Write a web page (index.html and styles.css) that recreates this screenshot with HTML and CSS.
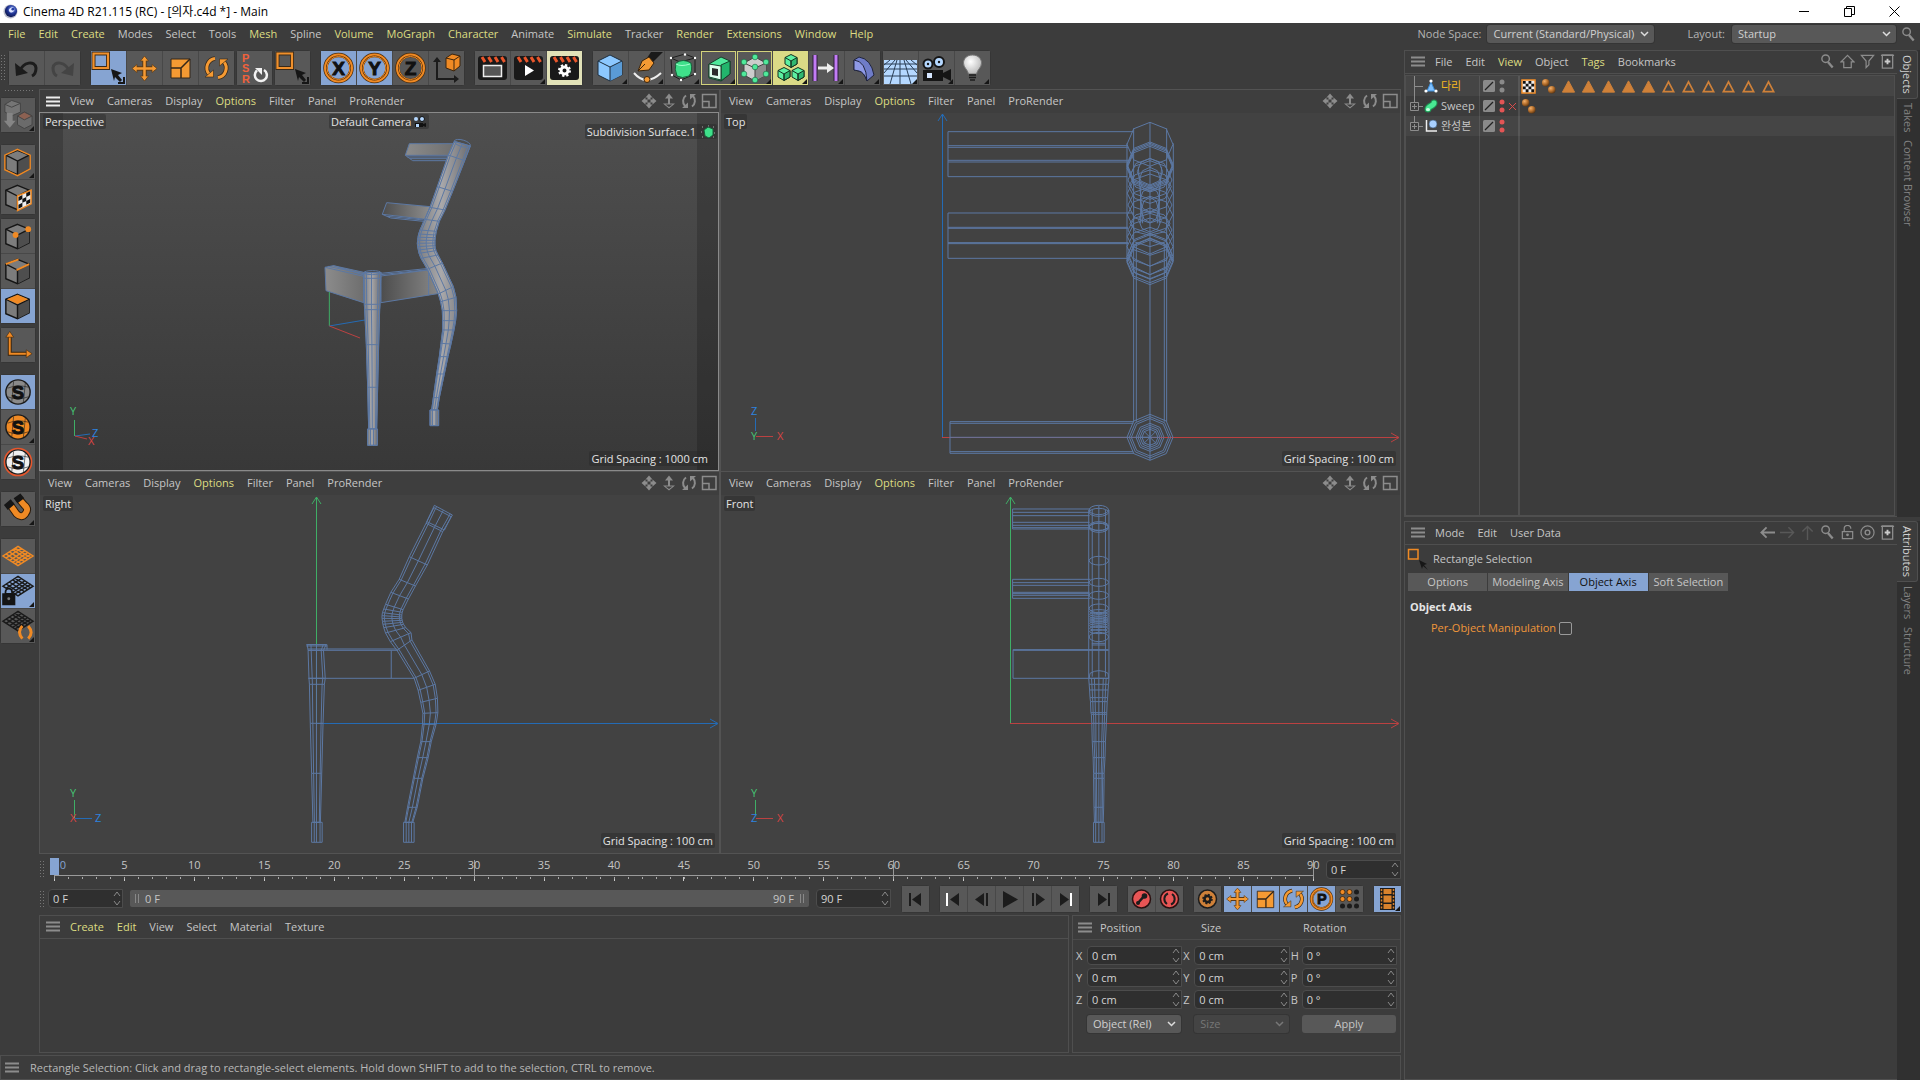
FILE: index.html
```html
<!DOCTYPE html>
<html lang="en">
    <head>
        <meta charset="UTF-8" />
        <meta name="viewport" content="width=device-width, initial-scale=1" />
        <title>Cinema 4D R21.115 (RC) - [의자.c4d *] - Main</title>
        <link rel="stylesheet" href="styles.css">
    </head>
    <body>
        <!-- icon sprites -->
        <svg class="sprites" aria-hidden="true">
            <defs>
                <linearGradient id="steel" x1="0" x2="1"><stop offset="0" stop-color="#7b7d81" /><stop offset=".45" stop-color="#aaa9ab" /><stop offset="1" stop-color="#6b6c70" /></linearGradient>
                <linearGradient id="railA" x1="0" x2="1"><stop offset="0" stop-color="#8c8c8c" /><stop offset="1" stop-color="#6e6e6e" /></linearGradient>
                <linearGradient id="railB" x1="0" x2="1"><stop offset="0" stop-color="#4d4d4d" /><stop offset="1" stop-color="#8d8d8d" /></linearGradient>
                <radialGradient id="ball" cx=".35" cy=".3" r=".8"><stop offset="0" stop-color="#f3b06a" /><stop offset=".5" stop-color="#b56f2c" /><stop offset="1" stop-color="#4a2a0d" /></radialGradient>
                <radialGradient id="bulb" cx=".4" cy=".35" r=".7"><stop offset="0" stop-color="#fff" /><stop offset="1" stop-color="#b5b5b5" /></radialGradient>
                <radialGradient id="logo" cx=".6" cy=".35" r=".8"><stop offset="0" stop-color="#7e9cf5" /><stop offset=".5" stop-color="#1c2f8c" /><stop offset="1" stop-color="#0a0f30" /></radialGradient>
            </defs>
            <symbol id="burger" viewBox="0 0 14 10"><path d="M0 1h14M0 5h14M0 9h14" stroke="currentColor" stroke-width="2" /></symbol>
            <symbol id="chev" viewBox="0 0 9 6"><path d="M1 1l3.500 3.500L8 1" fill="none" stroke="currentColor" stroke-width="1.500" /></symbol>
            <symbol id="spin" viewBox="0 0 8 15"><path d="M1 5l3-4 3 4M1 10l3 4 3-4" fill="none" stroke="#8a8a8a" /></symbol>
            <symbol id="search" viewBox="0 0 16 16"><circle cx="6" cy="5" r="4" fill="none" stroke="currentColor" stroke-width="1.500" /><path d="M8.500 8.500l5 6" stroke="currentColor" stroke-width="2.500" /></symbol>
            <symbol id="home" viewBox="0 0 16 16"><path d="M8 1.500L1 8.500h3v6h8v-6h3z" fill="none" stroke="currentColor" stroke-width="1.300" /></symbol>
            <symbol id="filter" viewBox="0 0 16 16"><path d="M1.500 1.500h13l-5 6v4l-3 3v-7z" fill="none" stroke="currentColor" stroke-width="1.300" /></symbol>
            <symbol id="plus" viewBox="0 0 16 16"><path d="M2.500 1v14h11V1zM1 1.500h14" fill="none" stroke="currentColor" stroke-width="1.400" /><path d="M8 5v6M5 8h6" stroke="#ccc" stroke-width="2" /></symbol>
            <symbol id="back" viewBox="0 0 16 16"><path d="M1 8h15M7 2.500L1.500 8 7 13.500" fill="none" stroke="currentColor" stroke-width="2" /></symbol>
            <symbol id="fwd" viewBox="0 0 16 16"><path d="M0 8h15M9 2.500L14.500 8 9 13.500" fill="none" stroke="currentColor" stroke-width="1.500" /></symbol>
            <symbol id="up" viewBox="0 0 16 16"><path d="M8 16V1M2.500 7L8 1.500 13.500 7" fill="none" stroke="currentColor" stroke-width="1.500" /></symbol>
            <symbol id="lock" viewBox="0 0 16 16"><path d="M2.500 7h11v7.500h-11zM4.500 7V4a3.500 3.500 0 0 1 7 0" fill="none" stroke="currentColor" stroke-width="1.300" /><circle cx="8" cy="10.500" r="1.500" fill="currentColor" /></symbol>
            <symbol id="target" viewBox="0 0 16 16"><circle cx="8" cy="8" r="7" fill="none" stroke="currentColor" stroke-width="1.300" /><circle cx="8" cy="8" r="2.500" fill="none" stroke="currentColor" stroke-width="1.500" /></symbol>
            <symbol id="nav" viewBox="0 0 76 16">
                <path d="M8 .5l3.500 4h-2v2h-3v-2h-2zM8 15.500l3.500-4h-2v-2h-3v2h-2zM.5 8l4-3.500v2h2v3h-2v2zM15.500 8l-4-3.500v2h-2v3h2v2z" fill="#8c8c8c" />
                <path d="M28 .5l4 5h-3v5h5l-6 5-6-5h5v-5h-3z" fill="#8c8c8c" /><path d="M28 14l-3.500-2.500h7z" fill="#3e3e3e" />
                <path d="M45 2.500a7 7 0 0 0-1 10.500M51 13.500a7 7 0 0 0 1-10.500" fill="none" stroke="#8c8c8c" stroke-width="2" /><path d="M41 15h6v-5.500zM55 1h-6v5.500z" fill="#8c8c8c" />
                <path d="M61.500 1.500h13.500v13H61.500zM61.500 8.500h6.500v6M61 1.500h14" fill="none" stroke="#8c8c8c" stroke-width="1.500" />
            </symbol>
            <symbol id="undo" viewBox="0 0 35 34"><path d="M11 20C14 11 26 9 27 17c0 4-2 7-4 8" fill="none" stroke="#1c1c1c" stroke-width="3" /><path d="M6 12l1 13 12-3z" fill="#1c1c1c" /></symbol>
            <symbol id="redo" viewBox="0 0 35 34"><path d="M24 20C21 11 9 9 8 17c0 4 2 7 4 8" fill="none" stroke="#444" stroke-width="3" /><path d="M29 12l-1 13-12-3z" fill="#444" /></symbol>
            <symbol id="select" viewBox="0 0 35 34"><path d="M2.500 2.500h14.500v14.500H2.500z" fill="none" stroke="#3a2a18" stroke-width="4" /><path d="M2.500 2.500h14.500v14.500H2.500z" fill="none" stroke="#f0902c" stroke-width="2.200" /><path d="M20 18l11 4-4 2 4 5-2 2-5-5-1 4z" fill="#161616" /><path d="M27 32h6v-6" fill="none" stroke="#161616" stroke-width="2" /></symbol>
            <symbol id="move" viewBox="0 0 35 34"><path d="M17.500 7v21M7 17.500h21" stroke="#5c3a15" stroke-width="4.500" /><path d="M17.500 5l4 5h-8zM17.500 30l4-5h-8zM5 17.500l5-4v8zM30 17.500l-5-4v8z" fill="#f59a33" stroke="#5c3a15" stroke-width=".7" /><path d="M17.500 8v19M8 17.500h19" stroke="#f59a33" stroke-width="2.500" /></symbol>
            <symbol id="scale" viewBox="0 0 35 34"><path d="M8 8h19v19H8z" fill="#f59a33" stroke="#33261a" /><path d="M8 17h10v10M18 17l9-9" fill="none" stroke="#33261a" stroke-width="1.500" /></symbol>
            <symbol id="rotate" viewBox="0 0 35 34"><path d="M16 7.500a9.500 9.500 0 0 0-5.500 16M19 26.500a9.500 9.500 0 0 0 5.500-16" fill="none" stroke="#33261a" stroke-width="4.500" /><path d="M16 7.500a9.500 9.500 0 0 0-5.500 16M19 26.500a9.500 9.500 0 0 0 5.500-16" fill="none" stroke="#f59a33" stroke-width="3" /><path d="M6 26h8.500v-7zM29 8h-8.500v7z" fill="#f59a33" stroke="#33261a" stroke-width=".6" /></symbol>
            <symbol id="reset" viewBox="0 0 35 34"><path d="M20 19.500a6 6 0 1 0 7-.5" fill="none" stroke="#f2f2f2" stroke-width="2.500" /><path d="M18 17h7v7z" fill="#f2f2f2" /></symbol>
            <symbol id="ax" viewBox="0 0 35 34"><circle cx="17.500" cy="17" r="13" fill="none" stroke="#4a2c0c" stroke-width="4.500" /><circle cx="17.500" cy="17" r="13.500" fill="none" stroke="#f08a24" stroke-width="2" /><circle cx="17.500" cy="17" r="11.500" fill="none" stroke="#f08a24" /></symbol>
            <symbol id="coord" viewBox="0 0 35 34"><path d="M8 10v18h17" fill="none" stroke="#1c1c1c" stroke-width="2" /><path d="M8 6l4 5H4zM30 28l-5-4v8z" fill="#1c1c1c" /><path d="M17 7l6-4 8 2v10l-6 5-8-3z" fill="#f08a24" stroke="#3a240c" /><path d="M17 7l8 2 6-4M25 9v11" fill="none" stroke="#3a240c" /></symbol>
            <symbol id="clap" viewBox="0 0 35 34"><rect x="3" y="5" width="29" height="24" rx="3" fill="#191919" /><path d="M7 6l3 5M13.500 6l3 5M20 6l3 5M26.500 6l3 5" stroke="#e9562b" stroke-width="3" /></symbol>
            <symbol id="cube" viewBox="0 0 35 34"><path d="M17 4l12 6v14l-12 6-12-6V10z" fill="#8cc8ff" stroke="#1d2d3c" /><path d="M17 16l12-6v14l-12 6z" fill="#5a9bd6" /><path d="M5 10l12 6 12-6M17 16v14" fill="none" stroke="#1d2d3c" /></symbol>
            <symbol id="pen" viewBox="0 0 35 34"><path d="M22 1h12L23 12l-5-5z" fill="#1a1a1a" /><path d="M9 20l4-10 7-4 5 6-5 7z" fill="#f59a33" stroke="#3a240c" /><path d="M9 20l7-7" stroke="#3a240c" /><path d="M5 22q12 14 27 0" fill="none" stroke="#eee" stroke-width="2" /><circle cx="18" cy="28.500" r="3" fill="#f59a33" stroke="#3a240c" /></symbol>
            <symbol id="sds" viewBox="0 0 35 34"><path d="M6 7l14-4 10 4v16l-14 6-9-5zM6 7l9 4 15-4M15 11l1 18" fill="none" stroke="#1d1d1d" /><path d="M11 12q7-5 15 0 2 8-2 13-7 3-12 0-3-7-1-13z" fill="#3fe08a" stroke="#17603a" /><path d="M11 13q5 3 14 0" fill="none" stroke="#a4ffcf" /><g fill="#fff"><circle cx="6" cy="7" r="1.200" /><circle cx="20" cy="3.500" r="1.200" /><circle cx="30" cy="7" r="1.200" /><circle cx="7" cy="24" r="1.200" /><circle cx="16" cy="29" r="1.200" /><circle cx="30" cy="23" r="1.200" /></g></symbol>
            <symbol id="extr" viewBox="0 0 35 34"><path d="M8 13l12-7 9 4v13l-9 7-12-3z" fill="#4fe99b" stroke="#17402a" /><path d="M20 14l9-4v13l-9 7z" fill="#22b56c" stroke="#17402a" /><path d="M8 13l12 2v14L8 26z" fill="#dfffee" stroke="#17402a" /><path d="M11 17l6 1v7l-6-1z" fill="#2c2c2c" /></symbol>
            <symbol id="lattice" viewBox="0 0 35 34"><path d="M18 6l11 6v12l-11 6-11-6V12z" fill="#ccc" stroke="#444" /><path d="M18 17l11-5v12l-11 6z" fill="#8d8d8d" /><path d="M7 12l11 5 11-5M18 17v13" fill="none" stroke="#444" /><g fill="#4fe99b" stroke="#17603a" stroke-width=".6"><circle cx="18" cy="6" r="2.800" /><circle cx="7" cy="11" r="2.800" /><circle cx="29" cy="11" r="2.800" /><circle cx="18" cy="16" r="2.800" /><circle cx="7" cy="23" r="2.800" /><circle cx="29" cy="23" r="2.800" /><circle cx="18" cy="29" r="2.800" /></g></symbol>
            <symbol id="gcube" viewBox="0 0 14 14"><path d="M7 .5l6 3v6.500l-6 3.500-6-3.500V3.500z" fill="#5cf0a2" stroke="#14301f" /><path d="M7 7l6-3.500v6.500l-6 3.500z" fill="#2fb871" stroke="#14301f" /><path d="M1 3.500L7 7v6.500" fill="none" stroke="#14301f" /></symbol>
            <symbol id="cloner" viewBox="0 0 35 34"><use href="#gcube" x="11" y="3" width="14" height="14" /><use href="#gcube" x="4" y="16" width="14" height="14" /><use href="#gcube" x="18" y="16" width="14" height="14" /></symbol>
            <symbol id="between" viewBox="0 0 35 34"><path d="M6 4v26M27 4v26" stroke="#2e1c3c" stroke-width="5" /><path d="M6 4v26M27 4v26" stroke="#c27cf5" stroke-width="3" /><path d="M9 17h10" stroke="#eee" stroke-width="3" /><path d="M18 12l7 5-7 5z" fill="#eee" /></symbol>
            <symbol id="bend" viewBox="0 0 35 34"><path d="M9 9l5-3q12 2 15 18l-7 6q-3-9-8-10l-5-1z" fill="#6f7cc8" stroke="#20243c" /><path d="M9 9q12 1 13 21q-3-9-8-10l-5-1z" fill="#8e99e6" stroke="#20243c" /></symbol>
            <symbol id="floor" viewBox="0 0 35 34"><path d="M1 9h33v24H1z" fill="#b5d8ff" /><path d="M1 13h33M1 18h33M1 25h33M12 9L1 22M17 9v24M23 9l11 13M7 9L1 14M28 9l6 5M14 9L7 33M21 9l7 24" fill="none" stroke="#2b3f57" /></symbol>
            <symbol id="camera" viewBox="0 0 35 34"><path d="M4 19h20v11H4zM24 22l8-4v12l-8-4z" fill="#151515" /><circle cx="9" cy="13" r="4.500" fill="#b5d8ff" stroke="#151515" stroke-width="2" /><circle cx="20" cy="11" r="5" fill="#b5d8ff" stroke="#151515" stroke-width="2" /><circle cx="9" cy="13" r="1.200" fill="#151515" /><circle cx="20" cy="11" r="1.200" fill="#151515" /><path d="M8 22h5v5H8z" fill="#d5e6ff" /></symbol>
            <symbol id="light" viewBox="0 0 35 34"><path d="M17.500 4c6 0 9 4 9 8 0 5-4 6-5 11h-8c-1-5-5-6-5-11 0-4 3-8 9-8z" fill="url(#bulb)" stroke="#777" /><path d="M14 24h7M14 26.500h7M15 29h5" stroke="#1c1c1c" stroke-width="1.500" /></symbol>
            <symbol id="box" viewBox="0 0 35 34"><path d="M17 5l12 5v14l-12 6-12-5V10z" fill="#7c7c7c" stroke="#151515" stroke-width="1.500" /><path d="M17 16l12-6v14l-12 6z" fill="#4e4e4e" /><path d="M5 10l12 6 12-6M17 16v14" fill="none" stroke="#151515" stroke-width="1.500" /></symbol>
            <symbol id="makeedit" viewBox="0 0 35 34"><path d="M11 2l9 3v9l-9 4-7-4V6z" fill="#757575" stroke="#444" /><path d="M4 6l7 3 9-4" fill="none" stroke="#444" /><path d="M6 15h6v8h3l-6 7-6-7h3z" fill="#858585" /><path d="M24 14l8 4v9l-8 4-7-4v-9z" fill="#6b6b6b" stroke="#444" /><path d="M24 14l8 4-8 4-7-4z" fill="#8c6152" stroke="#444" /></symbol>
            <symbol id="solo" viewBox="0 0 35 34"><circle cx="17.500" cy="17" r="12.500" fill="currentColor" stroke="#1c1c1c" stroke-width="1.500" /><path d="M7 13q10-4 21-1M7 22q10 4 21 0M13 6l-2 22M25 8l-2 20" fill="none" stroke="#1c1c1c" stroke-width=".6" /></symbol>
            <symbol id="mesh" viewBox="0 0 35 34"><path d="M17.500 7L33 17 17.500 27 2 17zM5.500 15L21 25M9 13l15.500 10M12 10.500L28 21M14.500 9L31 19M5.500 19L21 9M9 21.500l15.500-10M12 23.500L28 13M14.500 25L31 15" fill="none" stroke="currentColor" stroke-width="1.500" /></symbol>
            <symbol id="magnet" viewBox="0 0 35 34"><path d="M9 12l7 10q5 5 9 0 4-5-1-9l-6-7" fill="none" stroke="#2a1a0a" stroke-width="8" /><path d="M9 12l7 10q5 5 9 0 4-5-1-9l-6-7" fill="none" stroke="#f08a24" stroke-width="6" /><path d="M3 13l7-6 4 5-7 6zM13 6l7-5 4 5-7 5z" fill="#161616" /></symbol>
            <symbol id="camsm" viewBox="0 0 14 12"><circle cx="3" cy="3" r="2" fill="#b5d8ff" /><circle cx="9" cy="3" r="2.500" fill="#b5d8ff" stroke="#111" /><path d="M2 7h8v4H2zM10 8l3-1v4l-3-1z" fill="#111" /><path d="M3 8h3v3H3z" fill="#b5d8ff" /></symbol>
            <symbol id="sdssm" viewBox="0 0 14 14"><path d="M1 2h1M7 1h1M12 2h1M1 12h1M12 12h1M0 7h1M13 8h1" stroke="#aaa" /><path d="M3 5l4-3 5 2v6l-4 3-4-2z" fill="#3fe08a" stroke="#17603a" /></symbol>
            <symbol id="branch" viewBox="0 0 18 20"><path d="M8.500 0v20M8.500 10.500H17" fill="none" stroke="#8c8c8c" /></symbol>
            <symbol id="branchplus" viewBox="0 0 18 20"><path d="M8.500 0v6M8.500 10.500H17" stroke="#8c8c8c" /><path d="M4.500 6.500h8v8h-8z" fill="#3c3c3c" stroke="#8c8c8c" /><path d="M8.500 8v5M6 10.500h5" stroke="#8c8c8c" /></symbol>
            <symbol id="enable" viewBox="0 0 12 12"><rect width="12" height="12" rx="1.500" fill="#8a8a8a" /><path d="M2 10l8-8" stroke="#222" stroke-width="1.300" /></symbol>
            <symbol id="dots" viewBox="0 0 6 14"><circle cx="3" cy="3" r="2.500" fill="currentColor" /><circle cx="3" cy="11" r="2.500" fill="currentColor" /></symbol>
            <symbol id="phong" viewBox="0 0 16 16"><circle cx="5" cy="4" r="4" fill="url(#ball)" /><circle cx="11.500" cy="11.500" r="4" fill="url(#ball)" /></symbol>
            <symbol id="uvw" viewBox="0 0 16 16"><path d="M1 1h14v14H1z" fill="#eee" stroke="#f08a24" stroke-width="1.500" /><path d="M2 2h3v3H2zM8 2h3v3H8zM5 5h3v3H5zM11 5h3v3h-3zM2 8h3v3H2zM8 8h3v3H8zM5 11h3v3H5zM11 11h3v3h-3z" fill="#111" /></symbol>
            <symbol id="trif" viewBox="0 0 16 16"><path d="M8 2l6.500 12h-13z" fill="#cf8139" stroke="#cf8139" /></symbol>
            <symbol id="tri" viewBox="0 0 16 16"><path d="M8 3l5.500 10.500h-11z" fill="none" stroke="#cf8139" stroke-width="1.800" /></symbol>
        </svg>

        <header class="titlebar">
            <svg class="logo" viewBox="0 0 16 16"><circle cx="8" cy="8" r="7.500" fill="#b9bccb" /><circle cx="8.500" cy="7.500" r="6.500" fill="url(#logo)" /><ellipse cx="9.500" cy="6.500" rx="3" ry="2.500" fill="#dfe6ff" transform="rotate(-30 9 7)" /><circle cx="10.500" cy="5.500" r="1.500" fill="#2941a5" /></svg>
            <h1>Cinema 4D R21.115 (RC) - [의자.c4d *] - Main</h1>
            <div class="window-buttons">
                <button aria-label="Minimize"><svg width="11" height="11"><path d="M0 5.500h10" stroke="#000" /></svg></button>
                <button aria-label="Restore"><svg width="11" height="11"><path d="M.5 2.500h7v8h-7zM2.500 2.500v-2h8v8h-3" fill="none" stroke="#000" /></svg></button>
                <button aria-label="Close"><svg width="11" height="11"><path d="M.5.5l10 10M10.500.5l-10 10" stroke="#000" /></svg></button>
            </div>
        </header>

        <div class="menubar">
            <nav class="menu">
                <button class="hot">File</button><button class="hot">Edit</button><button class="hot">Create</button><button>Modes</button><button>Select</button><button>Tools</button><button class="hot">Mesh</button><button>Spline</button><button class="hot">Volume</button><button class="hot">MoGraph</button><button class="hot">Character</button><button>Animate</button><button class="hot">Simulate</button><button>Tracker</button><button class="hot">Render</button><button class="hot">Extensions</button><button class="hot">Window</button><button class="hot">Help</button>
            </nav>
            <div class="layout-pickers">
                <label for="nodeSpace">Node Space:</label>
                <span class="select node-space"><select id="nodeSpace"><option>Current (Standard/Physical)</option></select><svg class="chev"><use href="#chev" /></svg></span>
                <label for="layout">Layout:</label>
                <span class="select layout"><select id="layout"><option>Startup</option></select><svg class="chev"><use href="#chev" /></svg></span>
                <button class="ic" aria-label="Search"><svg><use href="#search" /></svg></button>
            </div>
        </div>

        <div class="workspace">
            <div class="stage">
                <div class="toolbar">
                    <span class="grip"></span>
                    <div class="group"><button aria-label="Undo"><svg><use href="#undo" /></svg></button><button aria-label="Redo"><svg><use href="#redo" /></svg></button></div>
                    <div class="group wide"><button class="on" aria-label="Rectangle Selection"><svg><use href="#select" /></svg></button><button aria-label="Move"><svg><use href="#move" /></svg></button><button aria-label="Scale"><svg><use href="#scale" /></svg></button><button aria-label="Rotate"><svg><use href="#rotate" /></svg></button></div>
                    <div class="group"><button aria-label="Reset PSR"><svg viewBox="0 0 35 34"><g class="glyph psr"><text x="5" y="11">P</text><text x="5" y="21">S</text><text x="5" y="32">R</text></g><use href="#reset" /></svg></button></div>
                    <div class="group"><button aria-label="Last Tool"><svg><use href="#select" /></svg></button></div>
                    <div class="group wide">
                        <button class="on" aria-label="X-Axis"><svg viewBox="0 0 35 34"><use href="#ax" /><text class="glyph" x="17.500" y="24">X</text></svg></button>
                        <button class="on" aria-label="Y-Axis"><svg viewBox="0 0 35 34"><use href="#ax" /><text class="glyph" x="17.500" y="24">Y</text></svg></button>
                        <button aria-label="Z-Axis"><svg viewBox="0 0 35 34"><use href="#ax" /><text class="glyph" x="17.500" y="24">Z</text></svg></button>
                        <button aria-label="Coordinate System"><svg><use href="#coord" /></svg></button>
                    </div>
                    <div class="group wide">
                        <button aria-label="Render View"><svg viewBox="0 0 35 34"><use href="#clap" /><path d="M8.500 14.500h18v11h-18z" fill="#555" stroke="#eee" stroke-width="1.500" /></svg></button>
                        <button class="more" aria-label="Render to Picture Viewer"><svg viewBox="0 0 35 34"><use href="#clap" /><path d="M14 14l9 5.500-9 5.500z" fill="#fff" /></svg></button>
                        <button class="cream" aria-label="Render Settings"><svg viewBox="0 0 35 34"><use href="#clap" /><circle cx="17.500" cy="19.500" r="3.500" fill="none" stroke="#fff" stroke-width="3" /><circle cx="17.500" cy="19.500" r="5.500" fill="none" stroke="#fff" stroke-width="2" stroke-dasharray="2.300 2" /></svg></button>
                    </div>
                    <div class="group wide">
                        <button class="more" aria-label="Cube"><svg><use href="#cube" /></svg></button><button class="more" aria-label="Pen"><svg><use href="#pen" /></svg></button><button class="more" aria-label="Subdivision Surface"><svg><use href="#sds" /></svg></button><button class="more framed" aria-label="Extrude"><svg><use href="#extr" /></svg></button><button class="more framed" aria-label="Lattice"><svg><use href="#lattice" /></svg></button><button class="more lime" aria-label="Cloner"><svg><use href="#cloner" /></svg></button><button class="more" aria-label="Linear Field"><svg><use href="#between" /></svg></button><button class="more" aria-label="Bend"><svg><use href="#bend" /></svg></button>
                    </div>
                    <div class="group"><button class="more" aria-label="Floor"><svg><use href="#floor" /></svg></button><button class="more" aria-label="Camera"><svg><use href="#camera" /></svg></button><button class="more" aria-label="Light"><svg><use href="#light" /></svg></button></div>
                </div>

                <div class="body">
                    <div class="palette">
                        <span class="grip flat"></span>
                        <div class="group"><button class="more" aria-label="Make Editable"><svg><use href="#makeedit" /></svg></button></div>
                        <div class="group wide">
                            <button class="more" aria-label="Model"><svg viewBox="0 0 35 34"><use href="#box" /><path d="M17 4l13 6v14l-13 7-13-6V10z" fill="none" stroke="#f08a24" stroke-width="1.500" /></svg></button>
                            <button aria-label="Texture"><svg viewBox="0 0 35 34"><use href="#box" /><path d="M17 16l14-6v14l-14 7z" fill="#eee" stroke="#f08a24" stroke-width="1.500" /><path d="M18 17l4-2v4l-4 2zM26 13l4-2v4l-4 2zM22 19l4-2v4l-4 2zM18 25l4-2v4l-4 2zM26 21l4-2v4l-4 2z" fill="#111" /></svg></button>
                        </div>
                        <div class="group">
                            <button aria-label="Points"><svg viewBox="0 0 35 34"><use href="#box" /><circle cx="15" cy="16" r="3" fill="#f08a24" /><circle cx="28" cy="10" r="3" fill="#f08a24" /></svg></button>
                            <button aria-label="Edges"><svg viewBox="0 0 35 34"><use href="#box" /><path d="M5 10l13-5M16 16l13-6" stroke="#f08a24" stroke-width="2" /></svg></button>
                            <button class="on" aria-label="Polygons"><svg viewBox="0 0 35 34"><use href="#box" /><path d="M6 10l11-4.500L28 10l-11 5z" fill="#f08a24" /></svg></button>
                        </div>
                        <div class="group"><button aria-label="Enable Axis"><svg viewBox="0 0 35 34"><path d="M9 8v18h18" fill="none" stroke="#3a240c" stroke-width="4" /><path d="M9 8v18h18" fill="none" stroke="#f08a24" stroke-width="2" /><path d="M9 3l4 6H5zM32 26l-6-4v8z" fill="#f08a24" stroke="#3a240c" stroke-width=".6" /></svg></button></div>
                        <div class="group wide">
                            <button class="on gray" aria-label="Solo Off"><svg viewBox="0 0 35 34"><use href="#solo" /><text class="glyph" x="17.500" y="24">S</text></svg></button>
                            <button class="orange more" aria-label="Solo Single"><svg viewBox="0 0 35 34"><use href="#solo" /><text class="glyph" x="17.500" y="24">S</text></svg></button>
                            <button class="white" aria-label="Solo Hierarchy"><svg viewBox="0 0 35 34"><use href="#solo" /><circle cx="17.500" cy="17" r="14" fill="none" stroke="#e9562b" stroke-width="1.500" /><text class="glyph" x="17.500" y="24">S</text></svg></button>
                        </div>
                        <div class="group wide"><button class="more" aria-label="Snap"><svg><use href="#magnet" /></svg></button></div>
                        <div class="group wide">
                            <button class="orange" aria-label="Workplane"><svg><use href="#mesh" /></svg></button>
                            <button class="on black more" aria-label="Lock Workplane"><svg viewBox="0 0 35 34"><use href="#mesh" y="-5" /><path d="M2 20h12v11H2zM4.500 20v-2a3.500 3.500 0 0 1 7 0v2" fill="#151515" stroke="#151515" stroke-width="1.500" /><path d="M5.500 19v-1a2.500 2.500 0 0 1 5 0v1z" fill="#86a4d2" /><circle cx="8" cy="25" r="1.500" fill="#777" /></svg></button>
                            <button class="black more" aria-label="Planar Workplane"><svg viewBox="0 0 35 34"><use href="#mesh" y="-5" /><path d="M22 17q-6 6 0 13M28 30q6-6 0-13" fill="none" stroke="#f08a24" stroke-width="3" /></svg></button>
                        </div>
                    </div>

                    <div class="center">
                        <div class="views">
                            <section class="view active">
                                <header class="bar"><button class="ic" aria-label="Menu"><svg class="burger bright"><use href="#burger" /></svg></button><nav class="menu"><button>View</button><button>Cameras</button><button>Display</button><button class="hot">Options</button><button>Filter</button><button>Panel</button><button>ProRender</button></nav><svg class="nav"><use href="#nav" /></svg></header>
                                <div class="canvas">
                                    <svg class="scene" id="scenePersp" viewBox="40 113 679 358">
                                        <path class="shade" d="M40 113h23v358H40zM697 113h22v358h-22z" />
                                        <g class="wire" transform="translate(300 100) scale(.3333)">
                                            <path d="M328 131h138l-21 35H316z" fill="url(#railA)" /><path d="M316 166l22 16h104M330 176h112M322 171h120" />
                                            <path d="M260 308l130 12-14 38-129-15z" fill="url(#railB)" /><path d="M247 343l25 11 98 10M262 349l108 11" />
                                            <path d="M75 502l25-5 91 20v91L78 572z" fill="url(#railA)" /><path d="M75 502l116 27M100 497l91 28M84 499l107 22" />
                                            <path d="M243 528l157-20 32 70-189 30z" fill="url(#railB)" /><path d="M243 520l145-15M243 524l150-16M386 510v76" />
                                            <path class="green" d="M88 576v102" /><path class="blue" d="M88 678l107-18" /><path class="red" d="M88 678l92 36" />
                                        </g>
                                        <g class="axis"><path class="green" d="M74.500 436v-16" /><path class="blue" d="M75 436l15-2" /><path class="red" d="M75 436l12 3" /><text class="green" x="70" y="415">Y</text><text class="blue" x="92" y="437">Z</text><text class="red" x="88" y="445">X</text></g>
                                    </svg>
                                    <span class="tag left">Perspective</span><span class="tag middle">Default Camera<svg width="14" height="12"><use href="#camsm" /></svg></span><span class="tag right">Subdivision Surface.1 <svg width="14" height="14"><use href="#sdssm" /></svg></span><span class="tag bottom">Grid Spacing : 1000 cm</span>
                                </div>
                            </section>
                            <section class="view">
                                <header class="bar"><nav class="menu"><button>View</button><button>Cameras</button><button>Display</button><button class="hot">Options</button><button>Filter</button><button>Panel</button><button>ProRender</button></nav><svg class="nav"><use href="#nav" /></svg></header>
                                <div class="canvas">
                                    <svg class="scene" id="sceneTop" viewBox="721 113 679 358">
                                        <path class="blue" d="M942.500 437V114M938 121l4.500-7 4.500 7" /><path class="red" d="M942 437.500h457M1391 433l8 4.500-8 4.500" />
                                        <g class="wire" transform="translate(920 90) scale(.3333)">
                                            <path d="M640 125H84v135h538M84 167h540M84 172h540M84 211h540M84 216h540M640 369H84v136h538M84 412h540M84 415h540M84 458h540M84 461h540M642 995H90v95h552M90 1000h550M90 1042h600M90 1085h550" />
                                            <path d="M641 115v880M649 460v535M690 97v1014M733 460v535M740 115v880M621 160v355M760 160v355" />
                                        </g>
                                        <g class="axis"><path class="red" d="M756 436.500h17" /><path class="blue" d="M755.500 431v-13" /><text class="blue" x="751" y="415">Z</text><text class="green" x="751" y="440">Y</text><text class="red" x="777" y="440">X</text></g>
                                    </svg>
                                    <span class="tag left">Top</span><span class="tag bottom">Grid Spacing : 100 cm</span>
                                </div>
                            </section>
                            <section class="view">
                                <header class="bar"><nav class="menu"><button>View</button><button>Cameras</button><button>Display</button><button class="hot">Options</button><button>Filter</button><button>Panel</button><button>ProRender</button></nav><svg class="nav"><use href="#nav" /></svg></header>
                                <div class="canvas">
                                    <svg class="scene" id="sceneRight" viewBox="40 495 679 358">
                                        <path class="green" d="M316.500 723V497M312 504l4.500-7 4.500 7" /><path class="blue" d="M317 723.500h400M710 719l8 4.500-8 4.500" />
                                        <g class="wire" transform="translate(30 465) scale(.44 .3333)">
                                            <path d="M632 552h201M632 556h205M632 640h241M821 556v84M628 539h47v15M628 543h47M651 539v593" />
                                        </g>
                                        <g class="axis"><path class="green" d="M74.500 818v-18" /><path class="blue" d="M75 818.500h17" /><text class="green" x="70" y="797">Y</text><text class="red" x="70" y="822">X</text><text class="blue" x="95" y="822">Z</text></g>
                                    </svg>
                                    <span class="tag left">Right</span><span class="tag bottom">Grid Spacing : 100 cm</span>
                                </div>
                            </section>
                            <section class="view">
                                <header class="bar"><nav class="menu"><button>View</button><button>Cameras</button><button>Display</button><button class="hot">Options</button><button>Filter</button><button>Panel</button><button>ProRender</button></nav><svg class="nav"><use href="#nav" /></svg></header>
                                <div class="canvas">
                                    <svg class="scene" id="sceneFront" viewBox="721 495 679 358">
                                        <path class="green" d="M1010.500 723V497M1006 504l4.500-7 4.500 7" /><path class="red" d="M1010 723.500h388M1391 719l8 4.500-8 4.500" />
                                        <g class="wire" transform="translate(720 465) scale(.44 .3333)">
                                            <path d="M842 132H665v60h177M665 142h175M665 152h175M665 172h175M665 181h175M665 188h175M842 343H665v57h177M665 353h175M665 361h175M665 382h175M665 386h175M665 391h175M883 554H666v86h217M666 556h217" />
                                            <path d="M838 135v505M846 135v500M861 122v1010M876 135v500M884 135v505M845 535h32M845 540h32" />
                                        </g>
                                        <g class="axis"><path class="green" d="M755.500 814v-14" /><path class="red" d="M756 818.500h17" /><text class="green" x="751" y="797">Y</text><text class="blue" x="751" y="822">Z</text><text class="red" x="777" y="822">X</text></g>
                                    </svg>
                                    <span class="tag left">Front</span><span class="tag bottom">Grid Spacing : 100 cm</span>
                                </div>
                            </section>
                        </div>

                        <div class="timeline">
                            <span class="grip"></span>
                            <div class="ruler" id="ruler"><i class="playhead"></i></div>
                            <span class="num"><input type="text" value="0 F" aria-label="Current frame" /><svg><use href="#spin" /></svg></span>
                        </div>

                        <div class="playback">
                            <span class="grip"></span>
                            <span class="num"><input type="text" value="0 F" aria-label="Start frame" /><svg><use href="#spin" /></svg></span>
                            <div class="range"><span><i></i>0 F</span><span>90 F<i></i></span></div>
                            <span class="num"><input type="text" value="90 F" aria-label="End frame" /><svg><use href="#spin" /></svg></span>
                            <div class="group wide"><button aria-label="Go to Start"><svg viewBox="0 0 27 26"><path d="M7 7h2v13H7zM19 7v13l-9-6.500z" /></svg></button></div>
                            <div class="group wide">
                                <button aria-label="Previous Key"><svg viewBox="0 0 27 26"><path d="M6 7h2v13H6z" fill="#fff" /><path d="M19 7v13l-9-6.500z" /></svg></button>
                                <button aria-label="Previous Frame"><svg viewBox="0 0 27 26"><path d="M16 7v13l-9-6.500zM18 7h2v13h-2z" /></svg></button>
                                <button aria-label="Play"><svg viewBox="0 0 27 26"><path d="M7 5v17l15-8.500z" /></svg></button>
                                <button aria-label="Next Frame"><svg viewBox="0 0 27 26"><path d="M12 7v13l9-6.500zM8 7h2v13H8z" /></svg></button>
                                <button aria-label="Next Key"><svg viewBox="0 0 27 26"><path d="M18 7h2v13h-2z" fill="#fff" /><path d="M8 7v13l9-6.500z" /></svg></button>
                            </div>
                            <div class="group wide"><button aria-label="Go to End"><svg viewBox="0 0 27 26"><path d="M18 7h2v13h-2zM8 7v13l9-6.500z" /></svg></button></div>
                            <div class="group wide">
                                <button aria-label="Record"><svg viewBox="0 0 27 26"><circle cx="13.500" cy="13" r="9" fill="#e85555" stroke="#2a1010" stroke-width="1.500" /><path d="M10 17l7-8" stroke="#1c1c1c" stroke-width="2.500" /><circle cx="16.500" cy="10" r="2.800" /><circle cx="10" cy="17" r="2" /></svg></button>
                                <button aria-label="Autokeying"><svg viewBox="0 0 27 26"><circle cx="13.500" cy="13" r="9" fill="#e85555" stroke="#2a1010" stroke-width="1.500" /><path d="M12 7.500a6 6 0 0 0-1 10.500M15 18.500a6 6 0 0 0 1-10.500" fill="none" stroke="#1c1c1c" stroke-width="2" /></svg></button>
                            </div>
                            <div class="group wide"><button aria-label="Keyframe Selection"><svg viewBox="0 0 27 26"><circle cx="13.500" cy="13" r="9" fill="#cf8139" stroke="#1c1c1c" stroke-width="1.500" /><circle cx="13.500" cy="13" r="3" fill="none" stroke="#1c1c1c" stroke-width="2.500" /><circle cx="13.500" cy="13" r="4.500" fill="none" stroke="#1c1c1c" stroke-width="1.500" stroke-dasharray="2 1.500" /></svg></button></div>
                            <div class="group">
                                <button class="on" aria-label="Position keys"><svg viewBox="2 3 31 29"><use href="#move" width="35" height="34" /></svg></button>
                                <button class="on" aria-label="Scale keys"><svg viewBox="2 2 31 30"><use href="#scale" width="35" height="34" /></svg></button>
                                <button class="on" aria-label="Rotation keys"><svg viewBox="2 2 31 30"><use href="#rotate" width="35" height="34" /></svg></button>
                                <button class="on" aria-label="Parameter keys"><svg viewBox="0 0 35 34"><use href="#ax" /><text class="glyph" x="18" y="24">P</text></svg></button>
                                <button aria-label="Point keys"><svg viewBox="0 0 27 26"><g fill="#f08a24" stroke="#2a1a0a" stroke-width=".7"><circle cx="6.500" cy="6" r="2.500" /><circle cx="13.500" cy="6" r="2.500" /><circle cx="6.500" cy="13" r="2.500" /><circle cx="13.500" cy="13" r="2.500" /></g><circle cx="20.500" cy="6" r="2.500" /><circle cx="20.500" cy="13" r="2.500" /><circle cx="6.500" cy="20" r="2.500" /><circle cx="13.500" cy="20" r="2.500" /><circle cx="20.500" cy="20" r="2.500" /></svg></button>
                            </div>
                            <div class="group wide"><button class="on more" aria-label="Film"><svg viewBox="0 0 27 26"><path d="M6 2h15v22H6z" fill="#1c1c1c" /><path d="M9.500 3h8v5h-8zM9.500 9.500h8v7h-8zM9.500 18h8v5h-8z" fill="#d9822c" /><path d="M7.500 3v20M19.500 3v20" stroke="#d9822c" stroke-width="1.500" stroke-dasharray="2 1.500" /></svg></button></div>
                        </div>

                        <div class="managers">
                            <section class="panel materials">
                                <header class="bar"><button class="ic" aria-label="Menu"><svg class="burger"><use href="#burger" /></svg></button><nav class="menu"><button class="hot">Create</button><button class="hot">Edit</button><button>View</button><button>Select</button><button>Material</button><button>Texture</button></nav></header>
                            </section>
                            <section class="panel coords">
                                <header class="coord-head"><svg class="burger"><use href="#burger" /></svg><span>Position</span><span>Size</span><span>Rotation</span></header>
                                <form class="coord-grid">
                                    <label for="px">X</label><span class="num"><input id="px" type="text" value="0 cm" /><svg><use href="#spin" /></svg></span>
                                    <label for="sx">X</label><span class="num"><input id="sx" type="text" value="0 cm" /><svg><use href="#spin" /></svg></span>
                                    <label for="rh">H</label><span class="num"><input id="rh" type="text" value="0 °" /><svg><use href="#spin" /></svg></span>
                                    <label for="py">Y</label><span class="num"><input id="py" type="text" value="0 cm" /><svg><use href="#spin" /></svg></span>
                                    <label for="sy">Y</label><span class="num"><input id="sy" type="text" value="0 cm" /><svg><use href="#spin" /></svg></span>
                                    <label for="rp">P</label><span class="num"><input id="rp" type="text" value="0 °" /><svg><use href="#spin" /></svg></span>
                                    <label for="pz">Z</label><span class="num"><input id="pz" type="text" value="0 cm" /><svg><use href="#spin" /></svg></span>
                                    <label for="sz">Z</label><span class="num"><input id="sz" type="text" value="0 cm" /><svg><use href="#spin" /></svg></span>
                                    <label for="rb">B</label><span class="num"><input id="rb" type="text" value="0 °" /><svg><use href="#spin" /></svg></span>
                                    <i></i><span class="select"><select aria-label="Coordinate mode"><option>Object (Rel)</option></select><svg class="chev"><use href="#chev" /></svg></span>
                                    <i></i><span class="select off"><select aria-label="Size mode" disabled><option>Size</option></select><svg class="chev"><use href="#chev" /></svg></span>
                                    <i></i><button type="button" class="apply">Apply</button>
                                </form>
                            </section>
                        </div>
                    </div>
                </div>

                <footer class="status"><svg class="burger"><use href="#burger" /></svg><span>Rectangle Selection: Click and drag to rectangle-select elements. Hold down SHIFT to add to the selection, CTRL to remove.</span></footer>
            </div>

            <aside class="sidebar">
                <div class="dock objects">
                    <section class="dock-panel">
                        <header class="bar"><button class="ic" aria-label="Menu"><svg class="burger"><use href="#burger" /></svg></button><nav class="menu"><button>File</button><button>Edit</button><button class="hot">View</button><button>Object</button><button class="hot">Tags</button><button>Bookmarks</button></nav>
                            <div class="tools"><svg><use href="#search" /></svg><svg><use href="#home" /></svg><svg><use href="#filter" /></svg><svg><use href="#plus" /></svg></div></header>
                        <ul class="tree">
                            <li class="lit"><span class="name picked"><svg class="twig"><use href="#branch" /></svg><svg class="obj" viewBox="0 0 14 14"><path d="M7 3l4 9H3z" fill="#7fc0ff" stroke="#3f8fd8" /><g fill="#fff"><circle cx="7" cy="2" r="1.600" /><circle cx="2" cy="12" r="1.600" /><circle cx="12" cy="12" r="1.600" /></g></svg>다리</span><span class="flags"><svg class="enable"><use href="#enable" /></svg><svg class="dots"><use href="#dots" /></svg></span>
                                <span class="tags"><svg><use href="#uvw" /></svg><svg><use href="#phong" /></svg><svg><use href="#trif" /></svg><svg><use href="#trif" /></svg><svg><use href="#trif" /></svg><svg><use href="#trif" /></svg><svg><use href="#trif" /></svg><svg><use href="#tri" /></svg><svg><use href="#tri" /></svg><svg><use href="#tri" /></svg><svg><use href="#tri" /></svg><svg><use href="#tri" /></svg><svg><use href="#tri" /></svg></span></li>
                            <li><span class="name"><svg class="twig"><use href="#branchplus" /></svg><svg class="obj" viewBox="0 0 14 14"><path d="M4 10c0-3 6-3 6-6" fill="none" stroke="#1f8f52" stroke-width="7" stroke-linecap="round" /><path d="M4 10c0-3 6-3 6-6" fill="none" stroke="#49e893" stroke-width="5" stroke-linecap="round" /><ellipse cx="4" cy="10.500" rx="2" ry="1.500" fill="#c9ffe2" /></svg>Sweep</span><span class="flags"><svg class="enable"><use href="#enable" /></svg><svg class="dots hidden"><use href="#dots" /></svg><svg class="cross" viewBox="0 0 9 9"><path d="M1 1l7 7M8 1L1 8" stroke="#d94c4c" /></svg></span><span class="tags"><svg><use href="#phong" /></svg></span></li>
                            <li class="lit"><span class="name"><svg class="twig"><use href="#branchplus" /></svg><svg class="obj" viewBox="0 0 14 14"><path d="M2.500 1v11H13" fill="none" stroke="#eee" stroke-width="1.500" /><circle cx="9" cy="5" r="4" fill="#a9d0ff" stroke="#3c5877" stroke-width=".6" /></svg>완성본</span><span class="flags"><svg class="enable"><use href="#enable" /></svg><svg class="dots hidden"><use href="#dots" /></svg></span><span class="tags"></span></li>
                        </ul>
                    </section>
                    <nav class="side-tabs"><button class="current">Objects</button><button>Takes</button><button>Content Browser</button></nav>
                </div>
                <div class="dock attributes">
                    <section class="dock-panel">
                        <header class="bar"><button class="ic" aria-label="Menu"><svg class="burger"><use href="#burger" /></svg></button><nav class="menu"><button>Mode</button><button>Edit</button><button>User Data</button></nav>
                            <div class="tools"><svg><use href="#back" /></svg><svg class="dim"><use href="#fwd" /></svg><svg class="dim"><use href="#up" /></svg><svg><use href="#search" /></svg><svg><use href="#lock" /></svg><svg><use href="#target" /></svg><svg><use href="#plus" /></svg></div></header>
                        <div class="tool-title"><svg viewBox="0 0 22 22"><path d="M1.500 1.500h9.500v9.500H1.500z" fill="none" stroke="#f08a24" stroke-width="1.500" /><path d="M12 12l8 4-3 1 4 5-5-4-1 3z" fill="#161616" /></svg>Rectangle Selection</div>
                        <nav class="tabs"><button>Options</button><button>Modeling Axis</button><button class="current">Object Axis</button><button>Soft Selection</button></nav>
                        <h2>Object Axis</h2>
                        <div class="option"><label for="perObject">Per-Object Manipulation</label><input type="checkbox" id="perObject" /></div>
                    </section>
                    <nav class="side-tabs"><button class="current">Attributes</button><button>Layers</button><button>Structure</button></nav>
                </div>
            </aside>
        </div>
        <script src="scene.js"></script>
    </body>
</html>
```
FILE: styles.css
```css
* {
    box-sizing: border-box;
}
body {
    display: flex;
    flex-direction: column;
    min-height: 100vh;
    margin: 0;
    background-color: #3c3c3c;
    color: #c6c6c6;
    font: 11px/16px "Open Sans", "Noto Sans CJK KR", sans-serif;
}
button,
input,
select {
    margin: 0;
    padding: 0;
    border: none;
    background: none;
    color: inherit;
    font: inherit;
}
svg {
    display: block;
    flex: none;
}
.sprites {
    position: absolute;
    width: 0;
    height: 0;
}
.glyph {
    fill: #111;
    stroke: #111;
    font-family: "Liberation Sans", sans-serif;
    font-size: 19px;
    font-weight: bold;
    text-anchor: middle;
}
.psr {
    fill: #f0623c;
    stroke: none;
    font-size: 11px;
    text-anchor: start;
}

/* title and menus */
.titlebar {
    display: flex;
    align-items: center;
    height: 23px;
    padding: 0 3px;
    background-color: #fff;
    color: #000;
}
.titlebar h1 {
    flex: 1;
    margin: 0 0 0 5px;
    font-size: 12px;
    font-weight: normal;
}
.logo {
    width: 15px;
    height: 15px;
}
.window-buttons {
    display: flex;
}
.window-buttons button {
    display: grid;
    place-items: center;
    width: 45px;
    height: 20px;
}
.menubar {
    display: flex;
    justify-content: space-between;
    align-items: center;
    height: 23px;
    padding: 0 4px 1px 8px;
}
.menu {
    display: flex;
    gap: 13px;
}
.hot {
    color: #dcdc82;
}
.layout-pickers {
    display: flex;
    align-items: center;
    color: #b4b4b4;
}
.layout-pickers .ic {
    margin-left: 5px;
}
.ic {
    color: #8c8c8c;
}
.ic svg,
.tools svg {
    width: 15px;
    height: 15px;
}
.select {
    position: relative;
    display: block;
    height: 18px;
    border-radius: 3px;
    background-color: #585858;
    box-shadow: 0 0 0 1px #353535;
}
.select select {
    width: 100%;
    height: 18px;
    padding: 0 6px;
    appearance: none;
    color: #d0d0d0;
    opacity: 1;
}
.chev {
    position: absolute;
    top: 6px;
    right: 5px;
    width: 9px;
    height: 6px;
    color: #ddd;
    pointer-events: none;
}
.select.off {
    background-color: #444;
}
.off select,
.off .chev {
    color: #777;
}
.node-space {
    width: 167px;
    margin: 0 33px 0 6px;
}
.layout {
    width: 164px;
    margin-left: 7px;
}

/* frame of the main window */
.workspace {
    flex: 1;
    display: grid;
    grid-template-columns: minmax(0, 1fr) 519px;
}
.stage,
.center,
.sidebar {
    display: flex;
    flex-direction: column;
    min-width: 0;
}
.body {
    flex: 1;
    display: flex;
}
.center {
    flex: 1;
}
.grip {
    width: 6px;
    height: 28px;
    background: radial-gradient(circle, #777 0 1px, transparent 1px) 0 0 / 3px 3px;
}
.grip.flat {
    width: 29px;
    height: 4px;
}

/* tool buttons */
.toolbar {
    display: flex;
    align-items: center;
    height: 43px;
    padding-top: 1px;
}
.group {
    display: flex;
    gap: 1px;
    margin-left: 3px;
    border-radius: 3px;
    background-color: #484848;
    box-shadow: 0 0 0 1px #363636;
}
.toolbar .wide,
.playback .wide {
    margin-left: 11px;
}
.group button {
    position: relative;
    width: 35px;
    height: 34px;
    background-color: #585858;
}
.group svg {
    width: 100%;
    height: 100%;
}
.group .on {
    background-color: #86a4d2;
}
.group .cream {
    background-color: #e2e2b8;
}
.group .lime {
    background-color: #dada86;
}
.framed {
    box-shadow: inset 0 0 0 1px #d2d27c;
}
.more::after {
    content: "";
    position: absolute;
    right: 1px;
    bottom: 1px;
    border-bottom: 5px solid #161616;
    border-left: 5px solid transparent;
}
.palette {
    display: flex;
    flex-direction: column;
    gap: 5px;
    width: 39px;
    padding: 0 1px;
}
.palette .grip {
    margin: 0 3px;
}
.palette .group {
    flex-direction: column;
    width: 34px;
    margin: 0;
}
.palette .wide {
    margin-top: 8px;
}
.palette .group button {
    width: 34px;
}
.gray {
    color: #8a8a8a;
}
.orange {
    color: #f08a24;
}
.white {
    color: #f0f0f0;
}
.black {
    color: #1a1a1a;
}

/* viewports */
.views {
    flex: 1;
    display: grid;
    grid-template-columns: 1fr 1fr;
    grid-template-rows: 1fr 1fr;
    gap: 1px 2px;
    padding: 1px;
    background-color: #535353;
}
.view {
    display: flex;
    flex-direction: column;
    min-width: 0;
    background-color: #3e3e3e;
}
.bar {
    display: flex;
    align-items: center;
    height: 23px;
    padding: 0 2px 1px 8px;
}
.bar .menu {
    flex: 1;
}
.burger,
.ic .burger {
    width: 14px;
    height: 11px;
    color: #8c8c8c;
}
.bar > .ic {
    margin: 0 10px 0 -2px;
}
.ic .burger.bright {
    color: #eee;
}
.nav {
    width: 76px;
    height: 16px;
}
.canvas {
    position: relative;
    flex: 1;
    background-color: #424242;
}
.active .canvas {
    background: linear-gradient(#4f4f4f, #383838);
}
.active .canvas::after {
    content: "";
    position: absolute;
    inset: -1px 0 0 -1px;
    border: 1px solid #8a8a8a;
}
.scene {
    position: absolute;
    inset: 0;
    width: 100%;
    height: 100%;
}
.scene path,
.scene polyline,
.scene polygon,
.scene ellipse {
    stroke-width: 1px;
    vector-effect: non-scaling-stroke;
}
.scene > path,
.axis path {
    fill: none;
}
.scene > .shade {
    fill: #000;
    fill-opacity: 0.18;
}
.wire {
    fill: none;
    stroke: #5c78a3;
}
.scene path.green {
    stroke: #3fae66;
}
.scene path.blue {
    stroke: #246bb5;
}
.scene path.red {
    stroke: #bb4141;
}
.axis {
    font-size: 11px;
}
.axis text.green {
    fill: #45c574;
}
.axis text.blue {
    fill: #2d84e0;
}
.axis text.red {
    fill: #d94444;
}
.tag {
    position: absolute;
    display: flex;
    align-items: center;
    height: 15px;
    padding: 0 2px;
    border-radius: 2px;
    background-color: rgba(40, 40, 40, 0.45);
    color: #e4e4e4;
}
.tag.left {
    top: 1px;
    left: 3px;
}
.tag.middle {
    top: 1px;
    left: 289px;
    gap: 2px;
}
.tag.right {
    top: 11px;
    right: 2px;
    gap: 5px;
}
.tag.bottom {
    right: 4px;
    bottom: 5px;
}
.active .tag.bottom {
    right: 9px;
}

/* timeline */
.timeline {
    display: flex;
    align-items: center;
    height: 30px;
}
.timeline .grip,
.playback .grip {
    width: 5px;
    height: 18px;
}
.ruler {
    position: relative;
    flex: 1;
    display: flex;
    justify-content: space-between;
    height: 24px;
    margin: 0 12px 0 10px;
    background:
        linear-gradient(#9a9a9a, #9a9a9a) 0 18px / 100% 1px no-repeat,
        repeating-linear-gradient(90deg, #aaa 0 1px, transparent 1px calc((100% - 1px) / 90)) 0 20px / 100% 2px no-repeat,
        repeating-linear-gradient(90deg, #ccc 0 1px, transparent 1px calc((100% - 1px) / 18)) 0 20px / 100% 4px no-repeat,
        repeating-linear-gradient(90deg, #999 0 1px, transparent 1px calc((100% - 1px) / 3)) 0 3px / 100% 20px no-repeat;
}
.ruler span {
    display: flex;
    justify-content: center;
    width: 1px;
    white-space: nowrap;
}
.ruler span:nth-of-type(1) {
    margin-right: -8px;
    padding-left: 9px;
    color: #86a4d2;
}
.playhead {
    position: absolute;
    top: 1px;
    left: -4px;
    width: 9px;
    height: 17px;
    background-color: #86a4d2;
}
.num {
    position: relative;
    display: block;
    width: 75px;
    height: 19px;
}
.num input {
    width: 100%;
    height: 19px;
    padding: 0 14px 0 4px;
    border: 1px solid #4c4c4c;
    border-radius: 4px 0 0 4px;
    background-color: #2f2f2f;
    color: #d4d4d4;
}
.num svg {
    position: absolute;
    top: 2px;
    right: 2px;
    width: 8px;
    height: 15px;
}
.playback {
    display: flex;
    align-items: center;
    height: 29px;
}
.playback .num {
    margin-left: 4px;
}
.range {
    flex: 1;
    display: flex;
    justify-content: space-between;
    align-items: center;
    height: 17px;
    margin: 0 3px 0 7px;
    padding: 0 5px;
    border-radius: 2px;
    background-color: #585858;
}
.range span {
    display: flex;
    align-items: center;
    gap: 6px;
}
.range i {
    width: 4px;
    height: 9px;
    border: 1px solid #888;
    border-width: 0 1px;
}
.playback .group button {
    width: 27px;
    height: 26px;
}
.playback .group svg {
    fill: #1c1c1c;
}

/* material and coordinate managers */
.managers {
    display: flex;
    gap: 3px;
    height: 138px;
    margin-top: 2px;
}
.panel {
    border: 1px solid #4f4f4f;
}
.materials {
    flex: 1;
}
.materials .bar {
    border-bottom: 1px solid #4f4f4f;
}
.coords {
    width: 329px;
}
.coord-head {
    display: grid;
    grid-template-columns: 22px 101px 102px 1fr;
    align-items: center;
    height: 24px;
    padding-left: 5px;
    border-bottom: 1px solid #4a4a4a;
}
.coord-grid {
    display: grid;
    grid-template-columns: 12px 1fr 12px 1fr 12px 1fr;
    row-gap: 3px;
    align-items: center;
    padding: 6px 3px 0 2px;
}
.coord-grid label {
    padding-left: 1px;
}
.coord-grid .num {
    width: auto;
}
.coord-grid .select,
.apply {
    height: 18px;
    margin: 3px 1px 0 0;
}
.apply {
    border-radius: 3px;
    background-color: #585858;
}
.status {
    display: flex;
    align-items: center;
    gap: 11px;
    height: 25px;
    margin-top: 2px;
    padding-left: 4px;
    border: 1px solid #4f4f4f;
    color: #b8b8b8;
}

/* sidebar */
.sidebar {
    gap: 4px;
    padding: 4px 0 0 3px;
}
.dock {
    flex: 46 1 0;
    display: grid;
    grid-template-columns: minmax(0, 1fr) 23px;
}
.attributes {
    flex: 55 1 0;
}
.dock-panel {
    display: flex;
    flex-direction: column;
    border: 1px solid #4f4f4f;
    border-right: none;
}
.dock .bar {
    border-bottom: 1px solid #4f4f4f;
}
.tools {
    display: flex;
    gap: 5px;
    color: #8c8c8c;
}
.dim {
    color: #585858;
}
.tree {
    flex: 1;
    margin: 1px 2px 0 0;
    padding: 0;
    border: 1px solid #4f4f4f;
    list-style: none;
    background:
        linear-gradient(#4f4f4f, #4f4f4f) 73px 0 / 1px 100% no-repeat,
        linear-gradient(#4f4f4f, #4f4f4f) 112px 0 / 2px 100% no-repeat;
}
.tree li {
    display: grid;
    grid-template-columns: 75px 39px 1fr;
    height: 20px;
}
.lit {
    background-color: rgba(255, 255, 255, 0.05);
}
.name,
.flags,
.tags {
    display: flex;
    align-items: center;
}
.name {
    white-space: nowrap;
}
.picked {
    color: #f5b921;
}
.twig {
    width: 18px;
    height: 20px;
}
.obj {
    width: 14px;
    height: 14px;
    margin-right: 3px;
}
.flags {
    gap: 3px;
    padding-left: 2px;
}
.enable {
    width: 12px;
    height: 12px;
}
.dots {
    width: 6px;
    height: 14px;
    margin-left: 1px;
    color: #8a8a8a;
}
.dots.hidden {
    color: #e35555;
}
.cross {
    width: 9px;
    height: 9px;
}
.tags {
    gap: 5px;
    padding-left: 1px;
}
.tags svg {
    width: 15px;
    height: 15px;
}
.side-tabs {
    display: flex;
    flex-direction: column;
    align-items: flex-start;
    background-color: #303030;
}
.side-tabs button {
    width: 21px;
    padding: 4px 2px;
    writing-mode: vertical-rl;
    color: #828282;
}
.side-tabs .current {
    border: 1px solid #4f4f4f;
    border-left: none;
    border-radius: 0 3px 3px 0;
    background-color: #3c3c3c;
    color: #d0d0d0;
}
.tool-title {
    display: flex;
    align-items: center;
    gap: 4px;
    height: 28px;
    padding-left: 2px;
}
.tool-title svg {
    width: 22px;
    height: 22px;
}
.tabs {
    display: flex;
    gap: 1px;
    width: 320px;
    margin-left: 3px;
}
.tabs button {
    flex: 1;
    height: 18px;
    background-color: #585858;
}
.tabs button.current {
    background-color: #86a4d2;
    color: #101010;
}
.dock-panel h2 {
    margin: 8px 0 5px 5px;
    color: #e4e4e4;
    font-size: 11px;
    line-height: 16px;
}
.option {
    display: flex;
    align-items: center;
    gap: 3px;
    padding-left: 26px;
    color: #f0973a;
}
.option input {
    width: 13px;
    height: 13px;
    border: 1px solid #9a9a9a;
    border-radius: 2px;
    appearance: none;
}
```
FILE: scene.js
```js
var NS = "http://www.w3.org/2000/svg";

function wire(id) {
    return document.querySelector("#" + id + " .wire");
}

function add(parent, tag, attrs) {
    var el = document.createElementNS(NS, tag);
    for (var key in attrs) {
        el.setAttribute(key, attrs[key]);
    }
    parent.appendChild(el);
}

// each row is one ring of the tube: left x, left y, right x, right y
function drawTube(parent, rows, ratios, fill) {
    if (fill) {
        var left = rows.map(function (r) { return r[0] + "," + r[1]; });
        var right = rows.map(function (r) { return r[2] + "," + r[3]; }).reverse();
        add(parent, "polygon", { points: left.concat(right).join(" "), fill: fill });
    }
    ratios.forEach(function (t) {
        var points = rows.map(function (r) {
            return (r[0] + (r[2] - r[0]) * t).toFixed(1) + "," + (r[1] + (r[3] - r[1]) * t).toFixed(1);
        });
        add(parent, "polyline", { points: points.join(" ") });
    });
    rows.forEach(function (r) {
        add(parent, "path", { d: "M" + r[0] + " " + r[1] + "L" + r[2] + " " + r[3] });
    });
}

function octagon(parent, cx, cy, rx, ry) {
    var points = [];
    for (var i = 0; i < 8; i++) {
        var a = (i * Math.PI) / 4;
        points.push((cx + rx * Math.sin(a)).toFixed(1) + "," + (cy - ry * Math.cos(a)).toFixed(1));
    }
    add(parent, "polygon", { points: points.join(" ") });
}

var persp = wire("scenePersp");
drawTube(persp, [
    [463, 124, 511, 138], [445, 165, 494, 182], [412, 260, 458, 274], [390, 322, 435, 330],
    [374, 358, 418, 364], [360, 390, 409, 394], [356, 402, 407, 405], [354, 412, 406, 413],
    [353, 421, 405, 421], [352, 430, 405, 429], [353, 440, 405, 437], [355, 450, 406, 444],
    [357, 460, 408, 452], [363, 475, 414, 465], [382, 508, 427, 489], [415, 582, 460, 560],
    [422, 605, 468, 592], [427, 632, 470, 632], [428, 662, 467, 662], [428, 690, 462, 690],
    [423, 730, 453, 732], [418, 770, 444, 770], [410, 822, 433, 822], [400, 893, 418, 893],
    [395, 930, 412, 930]
], [0, 0.12, 0.5, 0.88, 1], "url(#steel)");
drawTube(persp, [[390, 930, 416, 930], [390, 977, 416, 977]], [0, 0.3, 0.7, 1], "url(#steel)");
add(persp, "ellipse", { cx: 487, cy: 130, rx: 25, ry: 10, transform: "rotate(16 487 130)" });
drawTube(persp, [
    [191, 518, 243, 518], [192, 535, 242, 535], [193, 613, 240, 613], [194, 629, 239, 629],
    [199, 734, 236, 734], [203, 862, 233, 862], [206, 987, 230, 987]
], [0, 0.15, 0.45, 0.85, 1], "url(#steel)");
drawTube(persp, [[203, 987, 232, 987], [203, 1036, 232, 1036]], [0, 0.3, 0.6, 1], "url(#steel)");
add(persp, "ellipse", { cx: 217, cy: 518, rx: 26, ry: 6 });

var topWire = wire("sceneTop");
[163, 222, 226, 230, 235].forEach(function (y) {
    octagon(topWire, 690, y, 69, 66);
});
[[245, 38, 40], [256, 60, 50], [270, 66, 58], [268, 32, 36], [290, 64, 50], [310, 68, 58], [330, 30, 36], [345, 66, 54],
    [360, 26, 38], [375, 68, 56], [390, 34, 36], [400, 60, 36], [420, 66, 50], [440, 68, 56], [470, 69, 58], [492, 66, 62],
    [500, 69, 66], [506, 62, 62], [512, 69, 66], [517, 69, 67]].forEach(function (r) {
    octagon(topWire, 690, r[0], r[1], r[2]);
});
[69, 62, 56, 42, 36, 30, 24].forEach(function (r) {
    octagon(topWire, 690, 1042, r, r);
});
add(topWire, "path", { d: "M670 1022l40 40M710 1022l-40 40M662 1042h56M690 1014v56" });
add(topWire, "path", { d: "M655 230L668 400M725 230L712 400M662 290v110M718 290v110M640 470l50 22 50-22M640 505l50 24 50-24M640 530l50 24 50-24" });

var right = wire("sceneRight");
drawTube(right, [
    [919, 121, 960, 150], [900, 175, 938, 200], [862, 275, 903, 300], [839, 343, 876, 363],
    [820, 382, 860, 402], [808, 418, 848, 434], [804, 432, 846, 442], [801, 443, 845, 450],
    [800, 452, 845, 456], [800, 460, 845, 461], [801, 469, 846, 466], [802, 478, 847, 472],
    [804, 488, 849, 478], [808, 504, 854, 488], [819, 530, 866, 503], [834, 556, 868, 525],
    [873, 640, 908, 618], [882, 676, 921, 658], [888, 712, 926, 700], [893, 745, 927, 743],
    [892, 778, 923, 778], [888, 830, 912, 830], [880, 878, 905, 878], [871, 940, 893, 940],
    [858, 1027, 880, 1027], [852, 1072, 870, 1072]
], [0, 0.12, 0.5, 0.88, 1]);
drawTube(right, [[918, 128, 957, 155], [902, 170, 942, 195]], [0, 1]);
drawTube(right, [[849, 1072, 873, 1072], [849, 1132, 873, 1132]], [0, 0.25, 0.5, 0.75, 1]);
drawTube(right, [
    [630, 539, 673, 539], [632, 556, 667, 556], [634, 640, 671, 640], [635, 658, 669, 658],
    [637, 775, 666, 775], [640, 925, 663, 925], [643, 1072, 660, 1072]
], [0, 0.2, 0.85, 1]);
drawTube(right, [[640, 1072, 664, 1072], [640, 1132, 664, 1132]], [0, 0.25, 0.8, 1]);

var front = wire("sceneFront");
[[135, 14], [142, 12], [183, 13], [186, 11], [188, 14], [287, 13], [352, 12], [391, 12], [430, 13], [516, 14]].forEach(function (r) {
    add(front, "ellipse", { cx: 861, cy: r[0], rx: 22, ry: r[1] });
});
[440, 448, 455, 462, 468, 475, 482, 490, 500].forEach(function (y) {
    add(front, "ellipse", { cx: 861, cy: y, rx: 21, ry: 6 });
});
add(front, "path", { d: "M839 640l2-15q20-16 41 0l1 15" });
drawTube(front, [
    [838, 640, 884, 640], [839, 658, 883, 658], [840, 675, 882, 675], [841, 698, 881, 698],
    [842, 710, 880, 710], [843, 743, 879, 743], [844, 748, 879, 748], [845, 775, 878, 775],
    [846, 830, 876, 830], [848, 878, 875, 878], [849, 925, 873, 925], [849, 940, 873, 940],
    [850, 1027, 872, 1027], [851, 1072, 871, 1072]
], [0, 0.14, 0.28, 0.72, 0.86, 1]);
drawTube(front, [[849, 1072, 873, 1072], [849, 1132, 873, 1132]], [0, 0.2, 0.8, 1]);

// frame numbers above the ruler
var ruler = document.getElementById("ruler");
for (var frame = 0; frame <= 90; frame += 5) {
    var label = document.createElement("span");
    label.textContent = frame;
    ruler.appendChild(label);
}
```
